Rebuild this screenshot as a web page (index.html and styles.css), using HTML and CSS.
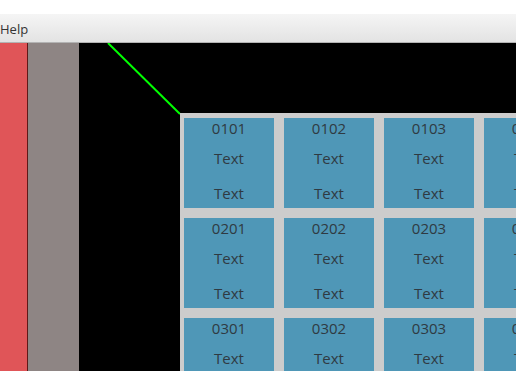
FILE: index.html
```html
<!DOCTYPE html>
<html>
<head>
  <title>Tiles</title>
  <meta name="viewport" content="width=device-width, initial-scale=1">
  <link rel="stylesheet" href="styles.css">
</head>
<body>
  <div class="top-gap"></div>
  <div class="menu-bar">
    <span class="menu-item">Help</span>
  </div>

  <div class="main">
    <div class="side-red"></div>
    <div class="side-gray"></div>
    <div class="canvas">
      <svg class="link-line" width="120" height="80">
        <line x1="29" y1="0" x2="101" y2="71" stroke="#00ff00" stroke-width="2"/>
      </svg>
      <div class="tile-grid" id="grid"></div>
    </div>
  </div>

  <script>
    // Build the tiles row by row
    var grid = document.getElementById('grid');
    for (var r = 1; r <= 3; r++) {
      for (var c = 1; c <= 4; c++) {
        var tile = document.createElement('div');
        tile.className = 'tile';
        var id = '0' + r + '0' + c;
        tile.innerHTML = '<span class="tile-id">' + id + '</span>' +
          '<span class="tile-text">Text</span>' +
          '<span class="tile-text last">Text</span>';
        grid.appendChild(tile);
      }
    }
  </script>
</body>
</html>
```

FILE: styles.css
```css
html, body {
  margin: 0;
  height: 100%;
  overflow: hidden;
  font-family: "Open Sans", sans-serif;
}
.top-gap {
  height: 14px;
  background-color: #ffffff;
}
/* Menu bar */
.menu-bar {
  height: 28px;
  display: flex;
  align-items: center;
  background: linear-gradient(#f5f5f5, #e3e3e3);
  border-bottom: 1px solid #b3b3b3;
}
.menu-item {
  font-size: 13px;
  color: #333333;
  padding-top: 1px;
}
/* Panels */
.main {
  display: flex;
  height: 328px;
}
.side-red {
  width: 27px;
  background-color: #e05558;
  border-right: 1px solid #5e1818;
}
.side-gray {
  width: 51px;
  background-color: #8e8584;
}
.canvas {
  flex: 1;
  position: relative;
  background-color: #000000;
  overflow: hidden;
}
.link-line {
  position: absolute;
  left: 0;
  top: 0;
}
.tile-grid {
  position: absolute;
  left: 101px;
  top: 70px;
  display: grid;
  grid-template-columns: repeat(4, 90px);
  grid-auto-rows: 90px;
  gap: 10px;
  padding: 5px 10px 10px 4px;
  background-color: #cccccc;
}
.tile {
  display: flex;
  flex-direction: column;
  align-items: center;
  background-color: #4f97b7;
  color: #2f3a42;
  font-size: 15px;
  line-height: 20px;
}
.tile-text {
  margin-top: 10px;
}
.tile-text.last {
  margin-top: 15px;
}
```
